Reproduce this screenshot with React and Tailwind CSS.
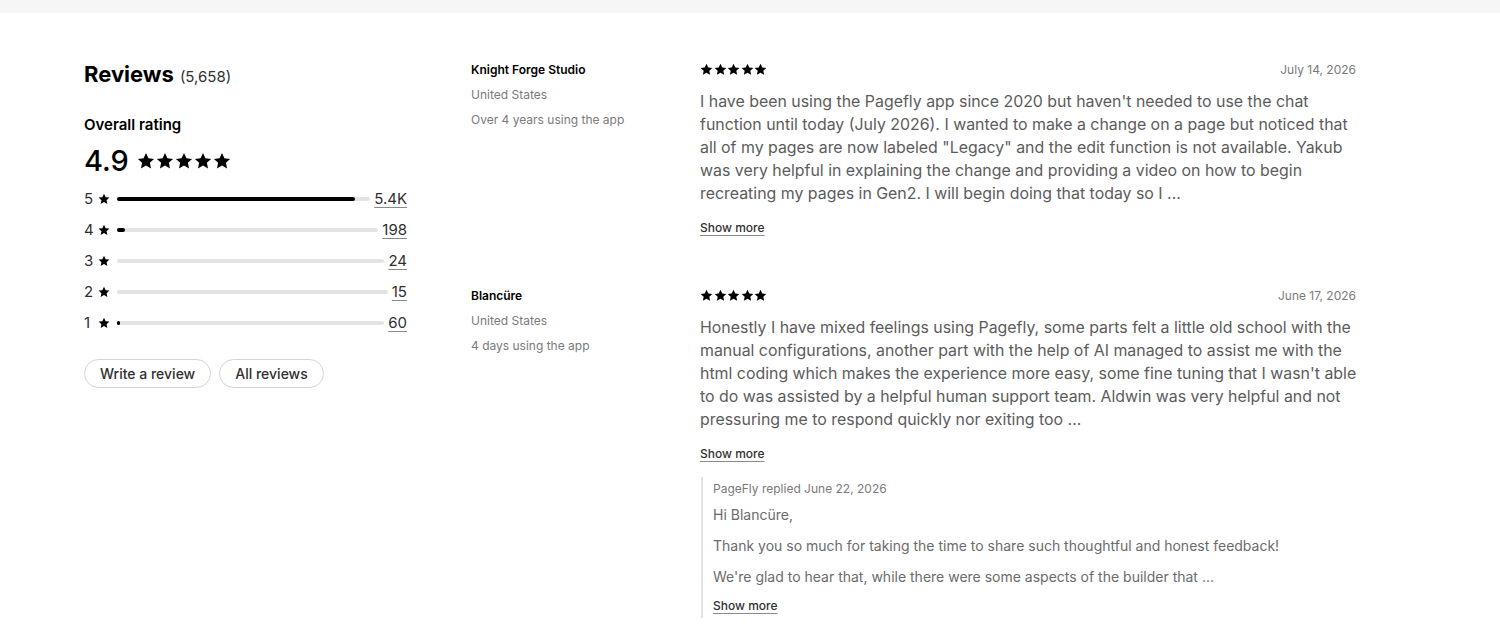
import React from 'react';

const Star = ({ size = 12 }) => (
  <svg width={size} height={size} viewBox="0 0 20 20" fill="currentColor">
    <path d="M10 1.2l2.7 5.8 6.3.7-4.7 4.3 1.3 6.2L10 15.1l-5.6 3.1 1.3-6.2L1 7.7l6.3-.7z" />
  </svg>
);

const Stars = ({ size, gap }) => (
  <div className={`flex items-center text-black ${gap}`}>
    {[0, 1, 2, 3, 4].map((i) => (
      <Star key={i} size={size} />
    ))}
  </div>
);

const breakdown = [
  { n: 5, pct: 94, value: '5.4K' },
  { n: 4, pct: 3, value: '198' },
  { n: 3, pct: 0, value: '24' },
  { n: 2, pct: 0, value: '15' },
  { n: 1, pct: 1, value: '60' },
];

// body kept as the lines shown in the truncated preview
const reviews = [
  {
    name: 'Knight Forge Studio',
    country: 'United States',
    usage: 'Over 4 years using the app',
    date: 'July 14, 2026',
    body: [
      "I have been using the Pagefly app since 2020 but haven't needed to use the chat",
      'function until today (July 2026). I wanted to make a change on a page but noticed that',
      'all of my pages are now labeled "Legacy" and the edit function is not available. Yakub',
      'was very helpful in explaining the change and providing a video on how to begin',
      'recreating my pages in Gen2. I will begin doing that today so I ...',
    ],
  },
  {
    name: 'Blancüre',
    country: 'United States',
    usage: '4 days using the app',
    date: 'June 17, 2026',
    body: [
      'Honestly I have mixed feelings using Pagefly, some parts felt a little old school with the',
      'manual configurations, another part with the help of AI managed to assist me with the',
      "html coding which makes the experience more easy, some fine tuning that I wasn't able",
      'to do was assisted by a helpful human support team. Aldwin was very helpful and not',
      'pressuring me to respond quickly nor exiting too ...',
    ],
    reply: {
      meta: 'PageFly replied June 22, 2026',
      lines: [
        'Hi Blancüre,',
        'Thank you so much for taking the time to share such thoughtful and honest feedback!',
        "We're glad to hear that, while there were some aspects of the builder that ...",
      ],
    },
  },
];

const App = () => {
  return (
    <div className="min-h-screen bg-white font-['Inter',sans-serif] text-[#1a1a1a]">
      <div className="h-[13px] bg-[#f6f6f7]" />

      <main className="flex pl-[84px] pt-[47px]">
        {/* Summary */}
        <div className="w-[323px] shrink-0">
          <h2 className="flex items-baseline gap-[6px]">
            <span className="text-[22px] font-bold leading-[28px] text-black">Reviews</span>
            <span className="text-[15px] text-[#303030]">(5,658)</span>
          </h2>

          <p className="mt-[26px] text-[15px] font-semibold leading-5 text-black">Overall rating</p>

          <div className="mt-[8px] flex items-center gap-[8px]">
            <span className="text-[29px] font-medium leading-9 text-black">4.9</span>
            <Stars size={18} gap="gap-[1px]" />
          </div>

          <div className="mt-[5px] flex flex-col">
            {breakdown.map((row) => (
              <div key={row.n} className="flex h-[31px] items-center">
                <span className="w-[10px] text-[15px] text-[#303030]">{row.n}</span>
                <span className="ml-[4px] text-black">
                  <Star size={12} />
                </span>
                <div className="ml-[7px] h-[4px] flex-1 rounded-full bg-[#e3e3e3]">
                  {row.pct > 0 && (
                    <div
                      className="h-[4px] min-w-[3px] rounded-full bg-black"
                      style={{ width: `${row.pct}%` }}
                    />
                  )}
                </div>
                <span className="ml-[4px] text-[15px] text-[#303030] underline decoration-[#8a8a8a] underline-offset-[3px]">
                  {row.value}
                </span>
              </div>
            ))}
          </div>

          <div className="mt-[20px] flex gap-[8px]">
            <button className="h-[29px] rounded-full border border-[#d4d4d4] px-[15px] text-[14px] font-medium text-[#303030]">
              Write a review
            </button>
            <button className="h-[29px] rounded-full border border-[#d4d4d4] px-[15px] text-[14px] font-medium text-[#303030]">
              All reviews
            </button>
          </div>
        </div>

        {/* Reviews */}
        <div className="ml-[64px] -mt-[3px] flex w-[885px] flex-col gap-[45px]">
          {reviews.map((r) => (
            <div key={r.name} className="flex">
              <div className="w-[229px] shrink-0 text-[12px] leading-[25px]">
                <p className="font-semibold text-black">{r.name}</p>
                <p className="text-[#7a7a7a]">{r.country}</p>
                <p className="text-[#7a7a7a]">{r.usage}</p>
              </div>
              <div className="w-[656px]">
                <div className="flex h-[25px] items-center justify-between">
                  <Stars size={13} gap="gap-[0.5px]" />
                  <span className="text-[12px] text-[#7a7a7a]">{r.date}</span>
                </div>
                <p className="mt-[8px] text-[15.9px] leading-[23px] text-[#5c5c5c]">
                  {r.body.map((line) => (
                    <span key={line} className="block whitespace-nowrap">
                      {line}
                    </span>
                  ))}
                </p>
                <button className="mt-[14px] text-[12px] font-medium text-[#303030] underline decoration-[#8a8a8a] underline-offset-[3px]">
                  Show more
                </button>

                {r.reply && (
                  <div className="mt-[13px] ml-[1px] border-l-2 border-[#e3e3e3] pb-[2px] pl-[10px] pt-[2px]">
                    <p className="text-[12px] leading-[20px] text-[#7a7a7a]">{r.reply.meta}</p>
                    <div className="mt-[6px] flex flex-col gap-[11px] text-[14px] leading-[20px] text-[#6b6b6b]">
                      {r.reply.lines.map((l) => (
                        <p key={l}>{l}</p>
                      ))}
                    </div>
                    <button className="mt-[10px] text-[12px] font-medium text-[#303030] underline decoration-[#8a8a8a] underline-offset-[3px]">
                      Show more
                    </button>
                  </div>
                )}
              </div>
            </div>
          ))}
        </div>
      </main>
    </div>
  );
};

export default App;
